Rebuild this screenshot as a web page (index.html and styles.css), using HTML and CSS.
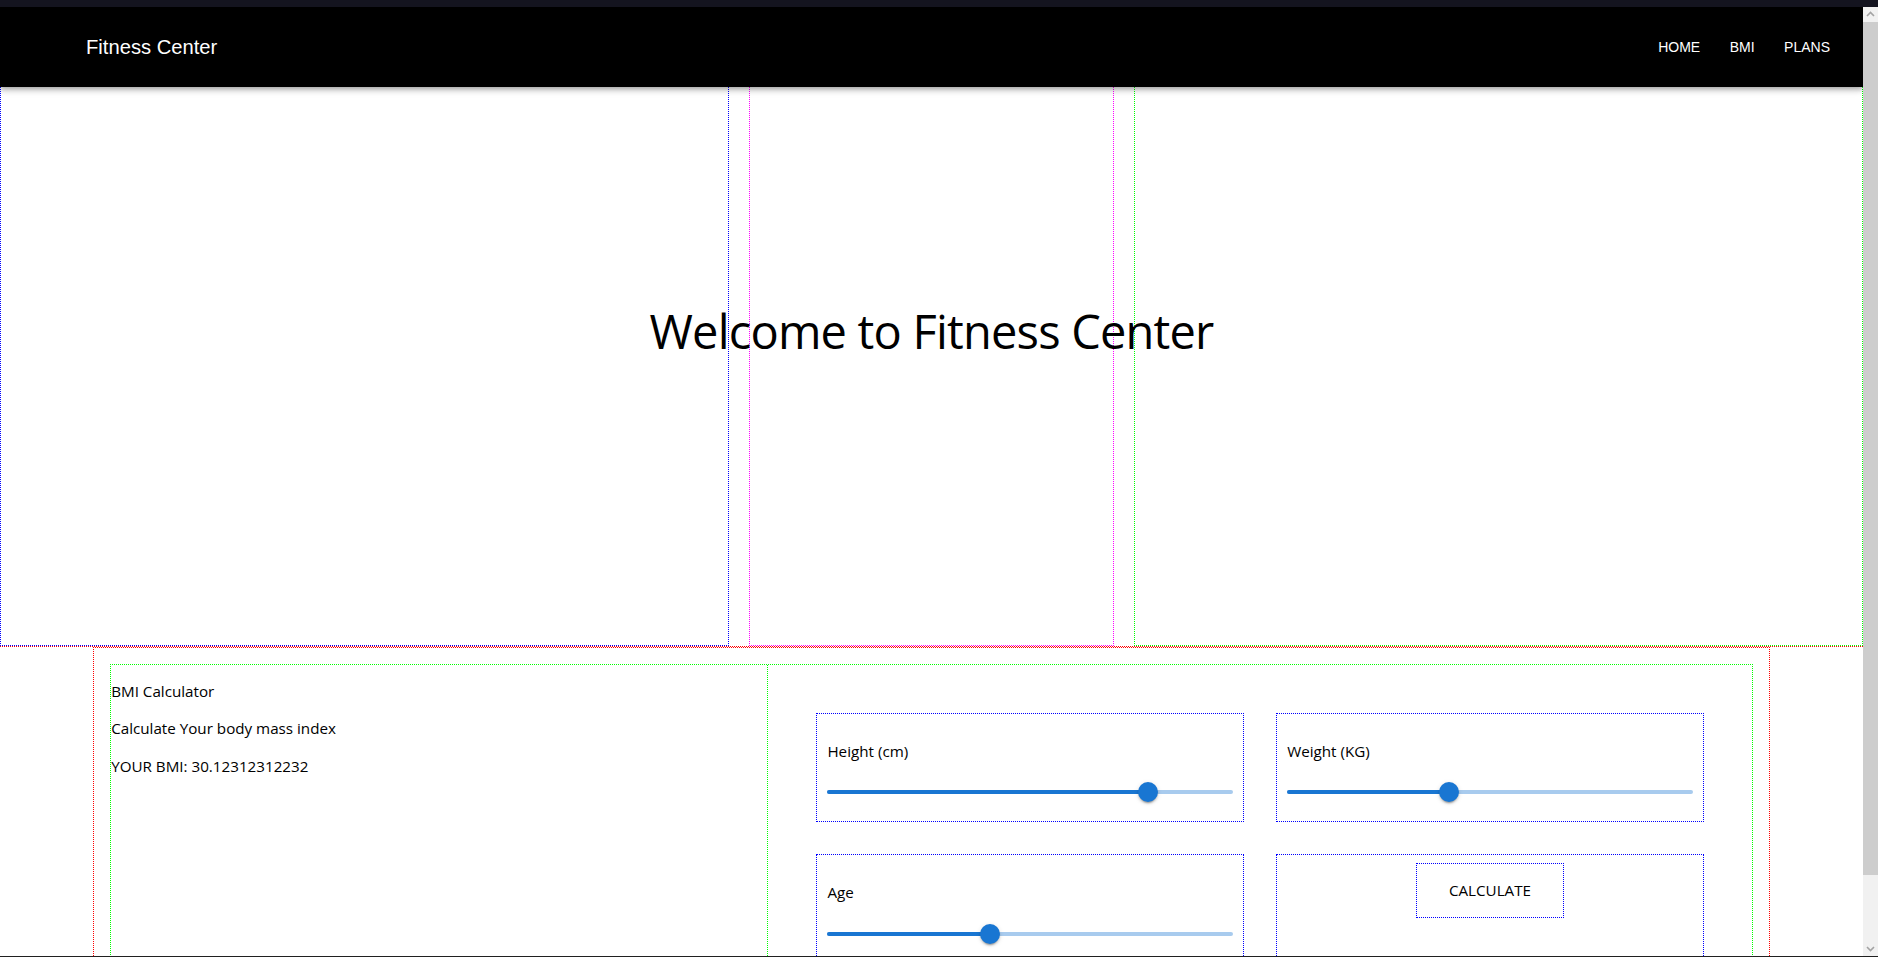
FILE: index.html
```html
<!DOCTYPE html>
<html lang="en">
<head>
<meta charset="utf-8">
<title>Fitness Center</title>
<link rel="stylesheet" href="styles.css">
</head>
<body>
<div class="window">
  <div class="chrome-top"></div>
  <div class="viewport">
    <div class="page">
      <header class="appbar">
        <div class="brand">Fitness Center</div>
        <nav class="nav">
          <a class="nav-link">HOME</a>
          <a class="nav-link">BMI</a>
          <a class="nav-link">PLANS</a>
        </nav>
      </header>

      <section class="hero">
        <div class="hero-col col-blue"></div>
        <div class="hero-col col-magenta"></div>
        <div class="hero-col col-green"></div>
        <h1 class="hero-title">Welcome to Fitness Center</h1>
      </section>

      <section class="bmi">
        <div class="bmi-grid">
          <div class="bmi-info">
            <p class="info-line">BMI Calculator</p>
            <p class="info-line">Calculate Your body mass index</p>
            <p class="info-line">YOUR BMI: 30.12312312232</p>
          </div>
          <div class="bmi-form">
            <div class="field">
              <p class="field-label">Height (cm)</p>
              <div class="slider">
                <div class="rail">
                  <div class="track" style="width:79%"></div>
                  <span class="thumb" style="left:79%"></span>
                </div>
              </div>
            </div>
            <div class="field">
              <p class="field-label">Weight (KG)</p>
              <div class="slider">
                <div class="rail">
                  <div class="track" style="width:40%"></div>
                  <span class="thumb" style="left:40%"></span>
                </div>
              </div>
            </div>
            <div class="field">
              <p class="field-label">Age</p>
              <div class="slider">
                <div class="rail">
                  <div class="track" style="width:40%"></div>
                  <span class="thumb" style="left:40%"></span>
                </div>
              </div>
            </div>
            <div class="field field-action">
              <button class="calc-btn" type="button">Calculate</button>
            </div>
          </div>
        </div>
      </section>
    </div>

    <div class="scrollbar">
      <div class="sb-btn">
        <svg width="15" height="15" viewBox="0 0 15 15"><polyline points="4,9 7.5,5.5 11,9" fill="none" stroke="#a3a3a3" stroke-width="1.6"/></svg>
      </div>
      <div class="sb-track"><div class="sb-thumb"></div></div>
      <div class="sb-btn">
        <svg width="15" height="15" viewBox="0 0 15 15"><polyline points="4,6 7.5,9.5 11,6" fill="none" stroke="#a3a3a3" stroke-width="1.6"/></svg>
      </div>
    </div>
  </div>
  <div class="chrome-bottom"></div>
</div>
</body>
</html>
```

FILE: styles.css
```css
html, body {
  margin: 0;
  padding: 0;
  height: 100%;
  overflow: hidden;
  background: #fff;
}

.window {
  width: 1878px;
  height: 957px;
  display: flex;
  flex-direction: column;
  overflow: hidden;
  font-family: "Open Sans", "Noto Sans", sans-serif;
  color: #000;
}

.chrome-top {
  flex: none;
  height: 7px;
  background: #14141f;
}

.chrome-bottom {
  flex: none;
  height: 1px;
  background: #202020;
}

.viewport {
  flex: 1;
  min-height: 0;
  display: flex;
}

.page {
  flex: 1;
  min-width: 0;
  overflow: hidden;
  background: #fff;
}

/* ---------- App bar ---------- */
.appbar {
  position: relative;
  z-index: 2;
  height: 80px;
  box-sizing: border-box;
  display: flex;
  align-items: center;
  justify-content: space-between;
  padding: 0 33px 0 86px;
  background: #000;
  box-shadow: 0 2px 4px -1px rgba(0,0,0,0.2), 0 4px 5px 0 rgba(0,0,0,0.14), 0 1px 10px 0 rgba(0,0,0,0.12);
}

.brand {
  font-family: "Liberation Sans", Arial, sans-serif;
  font-size: 20.2px;
  color: #fff;
}

.nav {
  display: flex;
  gap: 29.5px;
}

.nav-link {
  font-family: "Liberation Sans", Arial, sans-serif;
  font-size: 14px;
  color: #fff;
  text-decoration: none;
}

/* ---------- Hero ---------- */
.hero {
  display: grid;
  grid-template-columns: 2fr 1fr 2fr;
  column-gap: 20px;
  box-sizing: border-box;
  height: 561px;
  margin-top: -1px;
  border-bottom: 1px dotted #ff0000;
}

.hero-col {
  grid-row: 1;
  border: 1px dotted;
}

.col-blue { grid-column: 1; border-color: #0000ff; }
.col-magenta { grid-column: 2; border-color: #ff00ff; }
.col-green { grid-column: 3; border-color: #00ff00; }

.hero-title {
  grid-row: 1;
  grid-column: 1 / -1;
  justify-self: center;
  align-self: start;
  margin: 213px 0 0;
  font-size: 47px;
  font-weight: 400;
  letter-spacing: -0.8px;
  line-height: normal;
  color: #000;
}

/* ---------- BMI section ---------- */
.bmi {
  width: 90%;
  box-sizing: border-box;
  margin: 0 auto;
  padding: 16px;
  border: 1px dotted #ff0000;
}

.bmi-grid {
  display: grid;
  grid-template-columns: 2fr 3fr;
  border: 1px dotted #00ff00;
}

.info-line {
  margin: 16px 0;
  font-size: 15.2px;
  line-height: 21.33px;
}

.bmi-form {
  border-left: 1px dotted #00ff00;
  padding: 48px;
  display: grid;
  grid-template-columns: 1fr 1fr;
  gap: 32px;
}

.field {
  border: 1px dotted #0000ff;
  padding: 8px 10px;
}

.field-label {
  margin: 19px 0 15px;
  font-size: 15.2px;
  line-height: 21.33px;
}

.slider {
  padding: 13px 0;
  margin-bottom: 6px;
}

.rail {
  position: relative;
  height: 4px;
  border-radius: 2px;
  background: #a8cbee;
}

.track {
  height: 100%;
  border-radius: 2px;
  background: #1976d2;
}

.thumb {
  position: absolute;
  top: 50%;
  width: 20px;
  height: 20px;
  margin: -10px 0 0 -10px;
  border-radius: 50%;
  background: #1976d2;
  box-shadow: 0 3px 1px -2px rgba(0,0,0,0.2), 0 2px 2px 0 rgba(0,0,0,0.14), 0 1px 5px 0 rgba(0,0,0,0.12);
}

.field-action {
  display: flex;
  justify-content: center;
  align-items: flex-start;
}

.calc-btn {
  font-family: "Open Sans", "Noto Sans", sans-serif;
  font-size: 15.2px;
  line-height: 21px;
  padding: 16px 32px;
  border: 1px dotted #0000ff;
  background: #fff;
  color: #000;
  text-transform: uppercase;
}

/* ---------- Scrollbar ---------- */
.scrollbar {
  flex: none;
  width: 15px;
  display: flex;
  flex-direction: column;
  background: #f1f1f1;
}

.sb-btn {
  flex: none;
  height: 15px;
  display: flex;
}

.sb-track {
  flex: 1;
}

.sb-thumb {
  height: 853px;
  background: #cdcdcd;
}
```
